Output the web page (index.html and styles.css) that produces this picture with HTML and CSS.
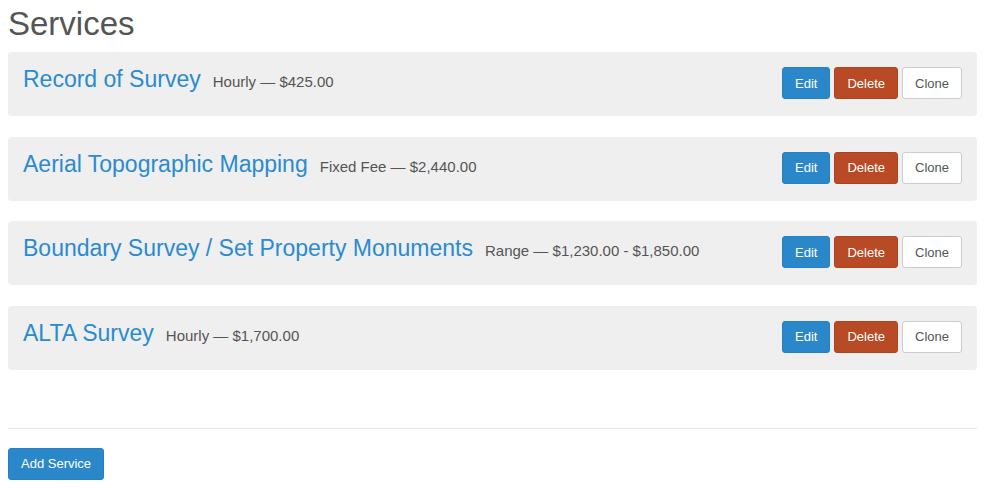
FILE: index.html
```html
<!DOCTYPE html>
<html lang="en">

<head>
  <meta charset="UTF-8">
  <meta name="viewport" content="width=device-width, initial-scale=1.0">
  <link rel="stylesheet" href="styles.css">
</head>

<body>
  <div class="page">
    <h1 class="page-title">Services</h1>

    <div class="service-list">
      <div class="service">
        <div class="service-info">
          <a class="service-name" href="#">Record of Survey</a>
          <span class="service-price">Hourly — $425.00</span>
        </div>
        <div class="service-actions">
          <button class="btn btn-primary">Edit</button>
          <button class="btn btn-danger">Delete</button>
          <button class="btn btn-default">Clone</button>
        </div>
      </div>

      <div class="service">
        <div class="service-info">
          <a class="service-name" href="#">Aerial Topographic Mapping</a>
          <span class="service-price">Fixed Fee — $2,440.00</span>
        </div>
        <div class="service-actions">
          <button class="btn btn-primary">Edit</button>
          <button class="btn btn-danger">Delete</button>
          <button class="btn btn-default">Clone</button>
        </div>
      </div>

      <div class="service">
        <div class="service-info">
          <a class="service-name" href="#">Boundary Survey / Set Property Monuments</a>
          <span class="service-price">Range — $1,230.00 - $1,850.00</span>
        </div>
        <div class="service-actions">
          <button class="btn btn-primary">Edit</button>
          <button class="btn btn-danger">Delete</button>
          <button class="btn btn-default">Clone</button>
        </div>
      </div>

      <div class="service">
        <div class="service-info">
          <a class="service-name" href="#">ALTA Survey</a>
          <span class="service-price">Hourly — $1,700.00</span>
        </div>
        <div class="service-actions">
          <button class="btn btn-primary">Edit</button>
          <button class="btn btn-danger">Delete</button>
          <button class="btn btn-default">Clone</button>
        </div>
      </div>
    </div>

    <hr class="divider">

    <button class="btn btn-primary">Add Service</button>
  </div>
</body>

</html>
```

FILE: styles.css
```css
* {
  box-sizing: border-box;
  margin: 0;
}

body {
  background: #fff;
  font-family: 'Liberation Sans', Arial, sans-serif;
  color: #555;
}

.page {
  padding: 4px 10px 0 8px;
}

.page-title {
  font-size: 33px;
  font-weight: normal;
  line-height: 40px;
  color: #555;
  margin-bottom: 8px;
}

.service-list {
  display: flex;
  flex-direction: column;
  gap: 20.5px;
}

.service {
  display: flex;
  align-items: center;
  justify-content: space-between;

  padding: 15px 15px 17px 15px;
  background: #efefef;
  border-radius: 4px;
}

.service-info {
  display: flex;
  align-items: baseline;
  gap: 12px;
  margin-top: -7px;
}

.service-name {
  font-size: 23px;
  color: #2a8bd0;
  text-decoration: none;
}

.service-price {
  font-size: 15px;
  color: #555;
}

.service-actions {
  display: flex;
  gap: 4px;
}

.btn {
  height: 32px;
  padding: 0 12px;
  border: 1px solid transparent;
  border-radius: 3px;

  font-family: 'Liberation Sans', Arial, sans-serif;
  font-size: 13px;
  cursor: pointer;
}

.btn-primary {
  background: #2a88ca;
  border-color: #2780c0;
  color: #fff;
}

.btn-danger {
  background: #b84a25;
  border-color: #ad4421;
  color: #fff;
}

.btn-default {
  background: #fff;
  border-color: #ccc;
  color: #555;
}

.divider {
  border: 0;
  border-top: 1px solid #e8e8e8;
  margin: 58px 0 19px 0;
}
```
